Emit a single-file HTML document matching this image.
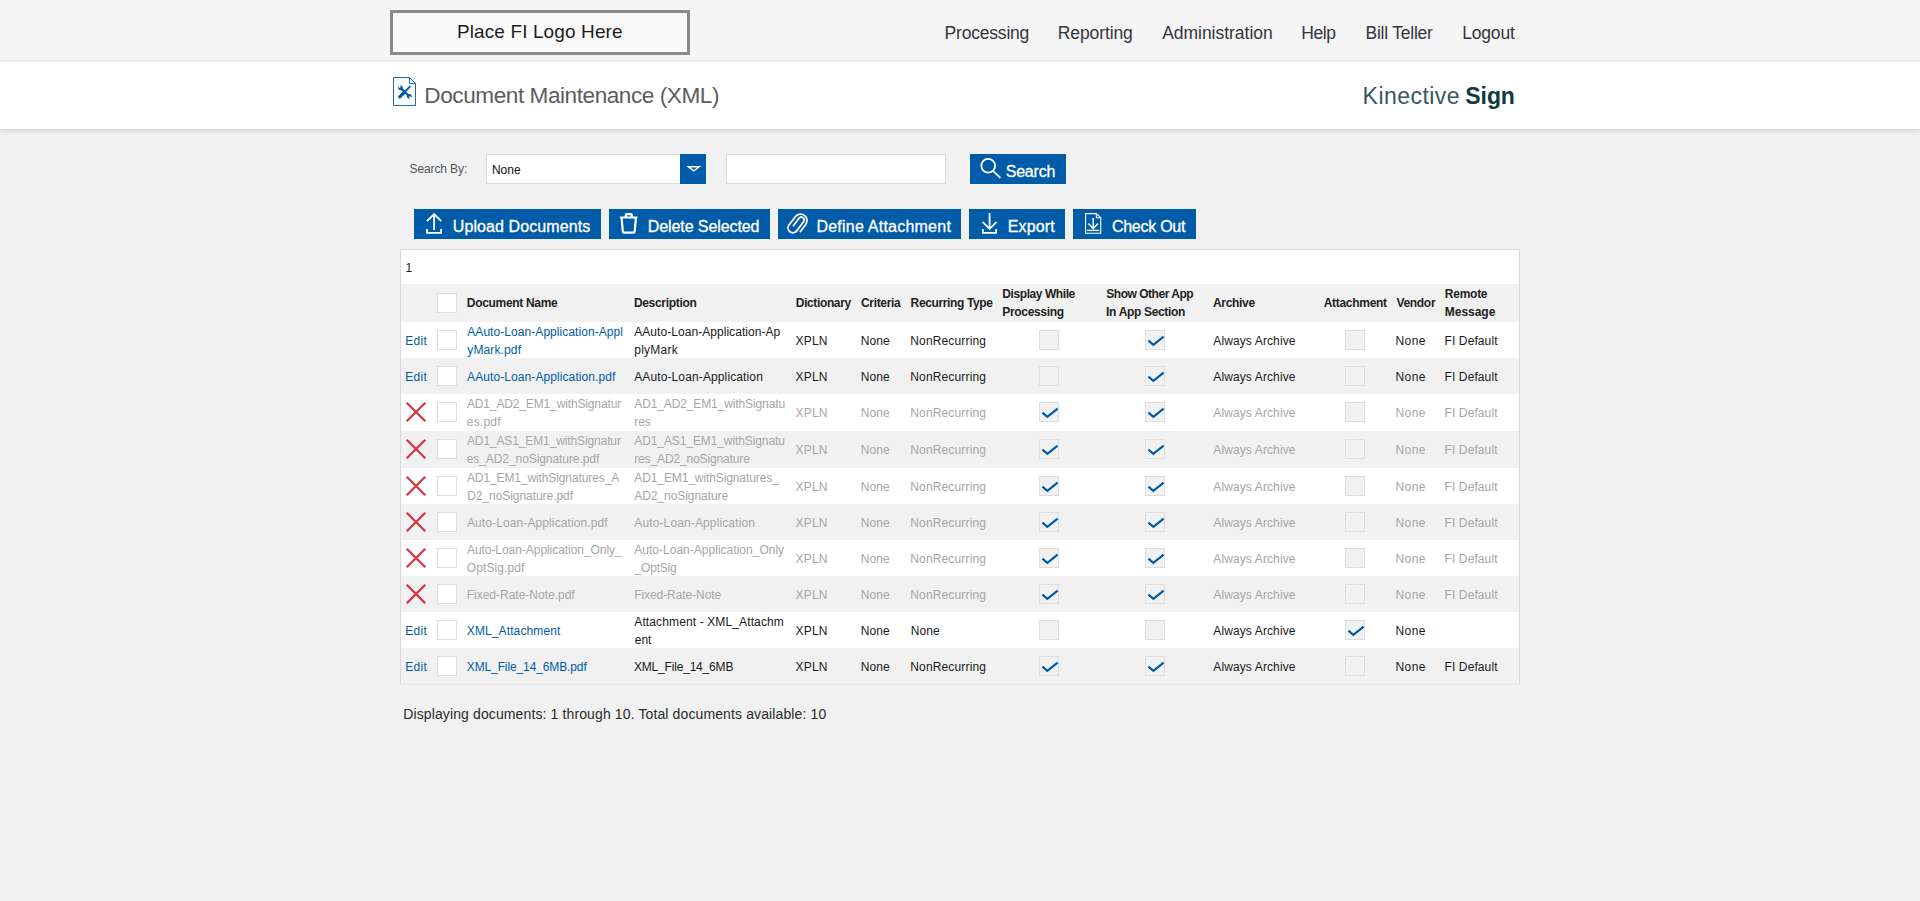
<!DOCTYPE html>
<html lang="en">
<head>
<meta charset="utf-8">
<title>Document Maintenance (XML)</title>
<style>
*{box-sizing:border-box;margin:0;padding:0}
html,body{width:1920px;height:901px;overflow:hidden}
body{background:#f1f1f1;font-family:"Liberation Sans",sans-serif;color:#222;position:relative}
div{white-space:nowrap}
#top{position:absolute;left:0;top:0;width:1920px;height:62px;background:#f5f5f5}
#logo{position:absolute;left:390px;top:10px;width:300px;height:45px;border:3px solid #8a8a8a;background:#fafafa}
#logo div{position:absolute;left:63.92px;top:7px;font-size:19px;line-height:24px;color:#1c1c1c;letter-spacing:0.118px}
.nav{position:absolute;display:block;white-space:nowrap;text-decoration:none;font-size:17.5px;line-height:22px;color:#34343f}
#band{position:absolute;left:0;top:62px;width:1920px;height:67px;background:#fff;box-shadow:0 1px 5px rgba(0,0,0,.17)}
#docico{position:absolute;left:390px;top:12px}
#title{position:absolute;left:424.35px;top:20px;font-size:22.6px;line-height:28px;color:#5c5c5c;letter-spacing:-0.452px}
#brand1,#brand2{position:absolute;top:20px;font-size:23px;line-height:28px;color:#0f3a41}
#brand1{left:1362.62px;letter-spacing:0.447px;color:#35595f}
#brand2{left:1465.29px;letter-spacing:-0.066px;font-weight:bold}
.lbl{position:absolute;left:409.54px;top:161px;font-size:12px;line-height:16px;color:#555;letter-spacing:-0.109px}
#sel{position:absolute;left:486px;top:154px;width:194px;height:30px;background:#fff;border:1px solid #dcdcdc;border-right:0}
#sel div{position:absolute;left:4.94px;top:7px;font-size:12px;line-height:16px;color:#111;letter-spacing:0.012px}
#selb{position:absolute;left:680px;top:154px;width:26px;height:30px;background:#005ca8}
#selb svg{position:absolute;left:0;top:0}
#inp{position:absolute;display:block;padding:0;margin:0;border-radius:0;outline:0;left:726px;top:154px;width:220px;height:30px;background:#fff;border:1px solid #dcdcdc}
.btn{position:absolute;display:block;border:0;padding:0;margin:0;border-radius:0;font-family:inherit;text-align:left;white-space:nowrap;overflow:visible;height:30px;background:#005ca8;color:#fff;font-size:16px;line-height:30px}
.btn span{position:absolute;top:3px;-webkit-text-stroke:0.3px #fff}
.btn svg{position:absolute;left:0;top:0}
#grid{position:absolute;left:400px;top:249px;width:1120px;height:436px;background:#fff;border:1px solid #d9d9d9;border-bottom-color:#e7e9eb}
#pager{position:absolute;left:4.52px;top:10px;font-size:12px;line-height:16px;color:#222}
.row{position:absolute;left:0;width:1118px}
.row.alt{background:#f1f1f1}
.row.hd{background:#f1f1f1;font-weight:bold}
.c{position:absolute;font-size:12px;line-height:18px;color:#1a1a1a}
.hd .c{color:#222}
.dis .c{color:#a6a6a6}
.c.lnk{color:#005ca8}
.cb{position:absolute;width:20px;height:20px;border:1px solid #dedede;background:#fff}
.cb.g{background:#f1f1f1}
.cb svg{position:absolute;left:-1px;top:-1px}
.xw{position:absolute;width:22px;height:22px}
#foot{position:absolute;left:403.21px;top:705px;font-size:14px;line-height:18px;color:#2a2a2a;letter-spacing:0.12px}
</style>
</head>
<body>
<div id="top">
<div id="logo"><div>Place FI Logo Here</div></div>
<a class="nav" style="left:944.54px;top:22px;letter-spacing:-0.195px">Processing</a>
<a class="nav" style="left:1057.82px;top:22px;letter-spacing:-0.115px">Reporting</a>
<a class="nav" style="left:1162.14px;top:22px;letter-spacing:-0.023px">Administration</a>
<a class="nav" style="left:1301.14px;top:22px;letter-spacing:-0.338px">Help</a>
<a class="nav" style="left:1365.54px;top:22px;letter-spacing:-0.238px">Bill Teller</a>
<a class="nav" style="left:1462.14px;top:22px;letter-spacing:-0.164px">Logout</a>
</div>
<div id="band">
<svg id="docico" width="30" height="36" viewBox="0 0 30 36" fill="none" stroke="#005ca8" stroke-width="0.9">
<path d="M3.5 3.5 H19.4 L25.5 9.4 V31.5 H3.5 Z M19.4 3.5 V9.5 H25.5"/>
<g transform="translate(-390 -74)">
<path d="M401 88.3 L409 96" stroke-width="2.3"/>
<circle cx="400.5" cy="87.9" r="2.4" fill="#005ca8" stroke="none"/><circle cx="409.3" cy="96.3" r="2.4" fill="#005ca8" stroke="none"/>
<path d="M400.3 87.6 L398.4 85.2 M409.5 96.6 L411.4 99" stroke="#fff" stroke-width="1.6"/>
<path d="M410.4 86.2 L405.6 91" stroke-width="1.8"/><path d="M404.7 92.1 L399.7 96.9" stroke-width="3.2" stroke-linecap="round"/>
</g>
</svg>
<div id="title">Document Maintenance (XML)</div>
<div id="brand1">Kinective</div><div id="brand2">Sign</div>
</div>
<div class="lbl">Search By:</div>
<div id="sel"><div>None</div></div><div id="selb"><svg width="26" height="30" viewBox="0 0 26 30" fill="none" stroke="#fff" stroke-width="1.4"><path d="M8.3 12.7 H19.3 L13.8 16.9 Z" stroke-linejoin="miter"/></svg></div>
<input id="inp" type="text" value="">
<button type="button" class="btn" style="left:970px;top:154px;width:96px"><svg width="40" height="30" viewBox="0 0 40 30" fill="none" stroke="#fff" stroke-width="1.8"><circle cx="18.2" cy="11.8" r="6.9"/><path d="M23.2 17.2 L30.4 23.8"/></svg><span style="left:35.71px;letter-spacing:-0.203px">Search</span></button>
<button type="button" class="btn" style="left:414px;top:209px;width:187px"><svg width="40" height="30" viewBox="0 0 40 30" fill="none" stroke="#fff" stroke-width="1.8"><path d="M13 20 V23.8 H27.1 V20" stroke-width="1.8"/><path d="M20.1 21 V4.8 M13 12.2 L20.1 5 L27.2 12.2"/></svg><span style="left:38.74px;letter-spacing:0.096px">Upload Documents</span></button>
<button type="button" class="btn" style="left:609px;top:209px;width:161px"><svg width="40" height="30" viewBox="0 0 40 30" fill="none" stroke="#fff" stroke-width="1.8"><path d="M12.6 9 L13.8 22.4 Q13.9 23.6 15.1 23.6 H24.4 Q25.6 23.6 25.7 22.4 L26.9 9 M10.9 8.5 H28.4 M16.8 8 V6.2 Q16.8 5.2 17.8 5.2 H21.8 Q22.8 5.2 22.8 6.2 V8" stroke-width="2.2"/></svg><span style="left:38.71px;letter-spacing:-0.084px">Delete Selected</span></button>
<button type="button" class="btn" style="left:778px;top:209px;width:183px"><svg width="40" height="30" viewBox="0 0 40 30" fill="none" stroke="#fff" stroke-width="1.8"><path transform="rotate(37)" d="M31.47 5.4 V-4.3 A6.51 6.51 0 0 0 18.45 -4.3 V6.2 A4.81 4.81 0 0 0 28.07 6.2 V-5.2 A2.84 2.84 0 0 0 22.39 -5.2 V4.7"/></svg><span style="left:38.38px;letter-spacing:0.232px">Define Attachment</span></button>
<button type="button" class="btn" style="left:969px;top:209px;width:96px"><svg width="40" height="30" viewBox="0 0 40 30" fill="none" stroke="#fff" stroke-width="1.8"><path d="M13.9 20 V23.9 H27.1 V20" stroke-width="1.7"/><path d="M20.6 4 V19.6 M13.6 12.8 L20.6 19.8 L27.6 12.8"/></svg><span style="left:38.79px;letter-spacing:0.129px">Export</span></button>
<button type="button" class="btn" style="left:1073px;top:209px;width:123px"><svg width="40" height="30" viewBox="0 0 40 30" fill="none" stroke="#fff" stroke-width="1.8"><path d="M12.6 4.6 H23.4 L27.8 8.8 V24.2 H12.6 Z M23.4 4.6 V8.8 H27.8" stroke-width="1.1"/><path d="M20.2 9 V19.4 M15.4 14.6 L20.2 19.6 L25 14.6" stroke-width="1.5"/><path d="M14.2 21.4 H26.2" stroke-width="1.3"/></svg><span style="left:38.94px;letter-spacing:-0.26px">Check Out</span></button>
<div id="grid" role="table">
<div id="pager">1</div>
<div role="row" class="row hd" style="top:34px;height:38px"><div class="cb" style="left:36px;top:9px"></div><div class="c" style="left:65.85000000000002px;top:10px;letter-spacing:-0.321px">Document Name</div><div class="c" style="left:232.90999999999997px;top:10px;letter-spacing:-0.315px">Description</div><div class="c" style="left:394.85px;top:10px;letter-spacing:-0.382px">Dictionary</div><div class="c" style="left:459.96000000000004px;top:10px;letter-spacing:-0.332px">Criteria</div><div class="c" style="left:509.59000000000003px;top:10px;letter-spacing:-0.369px">Recurring Type</div><div class="c" style="left:812.01px;top:10px;letter-spacing:-0.325px">Archive</div><div class="c" style="left:922.6400000000001px;top:10px;letter-spacing:-0.281px">Attachment</div><div class="c" style="left:995.4000000000001px;top:10px;letter-spacing:-0.298px">Vendor</div><div class="c" style="left:601.37px;top:1px;letter-spacing:-0.428px">Display While</div><div class="c" style="left:601.37px;top:19px;letter-spacing:-0.34px">Processing</div><div class="c" style="left:705.29px;top:1px;letter-spacing:-0.478px">Show Other App</div><div class="c" style="left:705.0899999999999px;top:19px;letter-spacing:-0.328px">In App Section</div><div class="c" style="left:1043.82px;top:1px;letter-spacing:-0.256px">Remote</div><div class="c" style="left:1043.82px;top:19px;letter-spacing:-0.026px">Message</div></div>
<div role="row" class="row" style="top:72px;height:36px"><div class="c lnk" style="left:4.35px;top:10px;letter-spacing:0.271px">Edit</div><div class="cb" style="left:36px;top:8px"></div><div class="c lnk" style="left:66.25px;top:1px;letter-spacing:0.063px">AAuto-Loan-Application-Appl</div><div class="c lnk" style="left:66.27px;top:19px;letter-spacing:0.128px">yMark.pdf</div><div class="c" style="left:233.28px;top:1px;letter-spacing:0.049px">AAuto-Loan-Application-Ap</div><div class="c" style="left:233.25px;top:19px;letter-spacing:0.233px">plyMark</div><div class="c" style="left:394.56px;top:10px;letter-spacing:0.167px">XPLN</div><div class="c" style="left:459.82px;top:10px;letter-spacing:0.054px">None</div><div class="c" style="left:509.24px;top:10px;letter-spacing:0.153px">NonRecurring</div><div class="cb g" style="left:638px;top:8px"></div><div class="cb g" style="left:744px;top:8px"><svg width="20" height="20" viewBox="0 0 20 20"><path d="M3.4 10.6 L8.4 14.9 L18.6 6.7" fill="none" stroke="#005ca8" stroke-width="2.2"/></svg></div><div class="c" style="left:812.28px;top:10px;letter-spacing:0.116px">Always Archive</div><div class="cb g" style="left:944px;top:8px"></div><div class="c" style="left:994.58px;top:10px;letter-spacing:0.364px">None</div><div class="c" style="left:1043.56px;top:10px;letter-spacing:0.104px">FI Default</div></div>
<div role="row" class="row alt" style="top:108px;height:36px"><div class="c lnk" style="left:4.35px;top:10px;letter-spacing:0.271px">Edit</div><div class="cb" style="left:36px;top:8px"></div><div class="c lnk" style="left:66.07px;top:10px;letter-spacing:0.088px">AAuto-Loan-Application.pdf</div><div class="c" style="left:233.16px;top:10px;letter-spacing:0.122px">AAuto-Loan-Application</div><div class="c" style="left:394.56px;top:10px;letter-spacing:0.167px">XPLN</div><div class="c" style="left:459.82px;top:10px;letter-spacing:0.054px">None</div><div class="c" style="left:509.24px;top:10px;letter-spacing:0.153px">NonRecurring</div><div class="cb g" style="left:638px;top:8px"></div><div class="cb g" style="left:744px;top:8px"><svg width="20" height="20" viewBox="0 0 20 20"><path d="M3.4 10.6 L8.4 14.9 L18.6 6.7" fill="none" stroke="#005ca8" stroke-width="2.2"/></svg></div><div class="c" style="left:812.28px;top:10px;letter-spacing:0.116px">Always Archive</div><div class="cb g" style="left:944px;top:8px"></div><div class="c" style="left:994.58px;top:10px;letter-spacing:0.364px">None</div><div class="c" style="left:1043.56px;top:10px;letter-spacing:0.104px">FI Default</div></div>
<div role="row" class="row dis" style="top:144px;height:37px"><div class="xw" style="left:4px;top:7px"><svg width="22" height="22" viewBox="0 0 22 22"><path d="M1.7 1.7 L20.3 20.3 M20.3 1.7 L1.7 20.3" fill="none" stroke="#dc3545" stroke-width="2.3"/></svg></div><div class="cb" style="left:36px;top:8px"></div><div class="c" style="left:65.94px;top:1px;letter-spacing:-0.139px">AD1_AD2_EM1_withSignatur</div><div class="c" style="left:65.73px;top:19px;letter-spacing:0.237px">es.pdf</div><div class="c" style="left:233.27px;top:1px;letter-spacing:-0.119px">AD1_AD2_EM1_withSignatu</div><div class="c" style="left:233.21px;top:19px;letter-spacing:-0.033px">res</div><div class="c" style="left:394.56px;top:10px;letter-spacing:0.167px">XPLN</div><div class="c" style="left:459.82px;top:10px;letter-spacing:0.054px">None</div><div class="c" style="left:509.24px;top:10px;letter-spacing:0.153px">NonRecurring</div><div class="cb g" style="left:638px;top:8px"><svg width="20" height="20" viewBox="0 0 20 20"><path d="M3.4 10.6 L8.4 14.9 L18.6 6.7" fill="none" stroke="#005ca8" stroke-width="2.2"/></svg></div><div class="cb g" style="left:744px;top:8px"><svg width="20" height="20" viewBox="0 0 20 20"><path d="M3.4 10.6 L8.4 14.9 L18.6 6.7" fill="none" stroke="#005ca8" stroke-width="2.2"/></svg></div><div class="c" style="left:812.28px;top:10px;letter-spacing:0.116px">Always Archive</div><div class="cb g" style="left:944px;top:8px"></div><div class="c" style="left:994.58px;top:10px;letter-spacing:0.364px">None</div><div class="c" style="left:1043.56px;top:10px;letter-spacing:0.104px">FI Default</div></div>
<div role="row" class="row alt dis" style="top:181px;height:37px"><div class="xw" style="left:4px;top:7px"><svg width="22" height="22" viewBox="0 0 22 22"><path d="M1.7 1.7 L20.3 20.3 M20.3 1.7 L1.7 20.3" fill="none" stroke="#dc3545" stroke-width="2.3"/></svg></div><div class="cb" style="left:36px;top:8px"></div><div class="c" style="left:65.96px;top:1px;letter-spacing:-0.122px">AD1_AS1_EM1_withSignatur</div><div class="c" style="left:65.73px;top:19px;letter-spacing:-0.076px">es_AD2_noSignature.pdf</div><div class="c" style="left:233.3px;top:1px;letter-spacing:-0.099px">AD1_AS1_EM1_withSignatu</div><div class="c" style="left:233.21px;top:19px;letter-spacing:-0.132px">res_AD2_noSignature</div><div class="c" style="left:394.56px;top:10px;letter-spacing:0.167px">XPLN</div><div class="c" style="left:459.82px;top:10px;letter-spacing:0.054px">None</div><div class="c" style="left:509.24px;top:10px;letter-spacing:0.153px">NonRecurring</div><div class="cb g" style="left:638px;top:8px"><svg width="20" height="20" viewBox="0 0 20 20"><path d="M3.4 10.6 L8.4 14.9 L18.6 6.7" fill="none" stroke="#005ca8" stroke-width="2.2"/></svg></div><div class="cb g" style="left:744px;top:8px"><svg width="20" height="20" viewBox="0 0 20 20"><path d="M3.4 10.6 L8.4 14.9 L18.6 6.7" fill="none" stroke="#005ca8" stroke-width="2.2"/></svg></div><div class="c" style="left:812.28px;top:10px;letter-spacing:0.116px">Always Archive</div><div class="cb g" style="left:944px;top:8px"></div><div class="c" style="left:994.58px;top:10px;letter-spacing:0.364px">None</div><div class="c" style="left:1043.56px;top:10px;letter-spacing:0.104px">FI Default</div></div>
<div role="row" class="row dis" style="top:218px;height:36px"><div class="xw" style="left:4px;top:7px"><svg width="22" height="22" viewBox="0 0 22 22"><path d="M1.7 1.7 L20.3 20.3 M20.3 1.7 L1.7 20.3" fill="none" stroke="#dc3545" stroke-width="2.3"/></svg></div><div class="cb" style="left:36px;top:8px"></div><div class="c" style="left:65.94px;top:1px;letter-spacing:-0.108px">AD1_EM1_withSignatures_A</div><div class="c" style="left:66.2px;top:19px;letter-spacing:-0.054px">D2_noSignature.pdf</div><div class="c" style="left:233.27px;top:1px;letter-spacing:-0.102px">AD1_EM1_withSignatures_</div><div class="c" style="left:233.27px;top:19px;letter-spacing:-0.059px">AD2_noSignature</div><div class="c" style="left:394.56px;top:10px;letter-spacing:0.167px">XPLN</div><div class="c" style="left:459.82px;top:10px;letter-spacing:0.054px">None</div><div class="c" style="left:509.24px;top:10px;letter-spacing:0.153px">NonRecurring</div><div class="cb g" style="left:638px;top:8px"><svg width="20" height="20" viewBox="0 0 20 20"><path d="M3.4 10.6 L8.4 14.9 L18.6 6.7" fill="none" stroke="#005ca8" stroke-width="2.2"/></svg></div><div class="cb g" style="left:744px;top:8px"><svg width="20" height="20" viewBox="0 0 20 20"><path d="M3.4 10.6 L8.4 14.9 L18.6 6.7" fill="none" stroke="#005ca8" stroke-width="2.2"/></svg></div><div class="c" style="left:812.28px;top:10px;letter-spacing:0.116px">Always Archive</div><div class="cb g" style="left:944px;top:8px"></div><div class="c" style="left:994.58px;top:10px;letter-spacing:0.364px">None</div><div class="c" style="left:1043.56px;top:10px;letter-spacing:0.104px">FI Default</div></div>
<div role="row" class="row alt dis" style="top:254px;height:36px"><div class="xw" style="left:4px;top:7px"><svg width="22" height="22" viewBox="0 0 22 22"><path d="M1.7 1.7 L20.3 20.3 M20.3 1.7 L1.7 20.3" fill="none" stroke="#dc3545" stroke-width="2.3"/></svg></div><div class="cb" style="left:36px;top:8px"></div><div class="c" style="left:65.96px;top:10px;letter-spacing:0.109px">Auto-Loan-Application.pdf</div><div class="c" style="left:233.3px;top:10px;letter-spacing:0.126px">Auto-Loan-Application</div><div class="c" style="left:394.56px;top:10px;letter-spacing:0.167px">XPLN</div><div class="c" style="left:459.82px;top:10px;letter-spacing:0.054px">None</div><div class="c" style="left:509.24px;top:10px;letter-spacing:0.153px">NonRecurring</div><div class="cb g" style="left:638px;top:8px"><svg width="20" height="20" viewBox="0 0 20 20"><path d="M3.4 10.6 L8.4 14.9 L18.6 6.7" fill="none" stroke="#005ca8" stroke-width="2.2"/></svg></div><div class="cb g" style="left:744px;top:8px"><svg width="20" height="20" viewBox="0 0 20 20"><path d="M3.4 10.6 L8.4 14.9 L18.6 6.7" fill="none" stroke="#005ca8" stroke-width="2.2"/></svg></div><div class="c" style="left:812.28px;top:10px;letter-spacing:0.116px">Always Archive</div><div class="cb g" style="left:944px;top:8px"></div><div class="c" style="left:994.58px;top:10px;letter-spacing:0.364px">None</div><div class="c" style="left:1043.56px;top:10px;letter-spacing:0.104px">FI Default</div></div>
<div role="row" class="row dis" style="top:290px;height:36px"><div class="xw" style="left:4px;top:7px"><svg width="22" height="22" viewBox="0 0 22 22"><path d="M1.7 1.7 L20.3 20.3 M20.3 1.7 L1.7 20.3" fill="none" stroke="#dc3545" stroke-width="2.3"/></svg></div><div class="cb" style="left:36px;top:8px"></div><div class="c" style="left:65.94px;top:1px;letter-spacing:-0.051px">Auto-Loan-Application_Only_</div><div class="c" style="left:65.84px;top:19px;letter-spacing:0.091px">OptSig.pdf</div><div class="c" style="left:233.27px;top:1px;letter-spacing:0.017px">Auto-Loan-Application_Only</div><div class="c" style="left:233.6px;top:19px;letter-spacing:-0.208px">_OptSig</div><div class="c" style="left:394.56px;top:10px;letter-spacing:0.167px">XPLN</div><div class="c" style="left:459.82px;top:10px;letter-spacing:0.054px">None</div><div class="c" style="left:509.24px;top:10px;letter-spacing:0.153px">NonRecurring</div><div class="cb g" style="left:638px;top:8px"><svg width="20" height="20" viewBox="0 0 20 20"><path d="M3.4 10.6 L8.4 14.9 L18.6 6.7" fill="none" stroke="#005ca8" stroke-width="2.2"/></svg></div><div class="cb g" style="left:744px;top:8px"><svg width="20" height="20" viewBox="0 0 20 20"><path d="M3.4 10.6 L8.4 14.9 L18.6 6.7" fill="none" stroke="#005ca8" stroke-width="2.2"/></svg></div><div class="c" style="left:812.28px;top:10px;letter-spacing:0.116px">Always Archive</div><div class="cb g" style="left:944px;top:8px"></div><div class="c" style="left:994.58px;top:10px;letter-spacing:0.364px">None</div><div class="c" style="left:1043.56px;top:10px;letter-spacing:0.104px">FI Default</div></div>
<div role="row" class="row alt dis" style="top:326px;height:36px"><div class="xw" style="left:4px;top:7px"><svg width="22" height="22" viewBox="0 0 22 22"><path d="M1.7 1.7 L20.3 20.3 M20.3 1.7 L1.7 20.3" fill="none" stroke="#dc3545" stroke-width="2.3"/></svg></div><div class="cb" style="left:36px;top:8px"></div><div class="c" style="left:65.68px;top:10px;letter-spacing:-0.002px">Fixed-Rate-Note.pdf</div><div class="c" style="left:233.2px;top:10px;letter-spacing:-0.075px">Fixed-Rate-Note</div><div class="c" style="left:394.56px;top:10px;letter-spacing:0.167px">XPLN</div><div class="c" style="left:459.82px;top:10px;letter-spacing:0.054px">None</div><div class="c" style="left:509.24px;top:10px;letter-spacing:0.153px">NonRecurring</div><div class="cb g" style="left:638px;top:8px"><svg width="20" height="20" viewBox="0 0 20 20"><path d="M3.4 10.6 L8.4 14.9 L18.6 6.7" fill="none" stroke="#005ca8" stroke-width="2.2"/></svg></div><div class="cb g" style="left:744px;top:8px"><svg width="20" height="20" viewBox="0 0 20 20"><path d="M3.4 10.6 L8.4 14.9 L18.6 6.7" fill="none" stroke="#005ca8" stroke-width="2.2"/></svg></div><div class="c" style="left:812.28px;top:10px;letter-spacing:0.116px">Always Archive</div><div class="cb g" style="left:944px;top:8px"></div><div class="c" style="left:994.58px;top:10px;letter-spacing:0.364px">None</div><div class="c" style="left:1043.56px;top:10px;letter-spacing:0.104px">FI Default</div></div>
<div role="row" class="row" style="top:362px;height:36px"><div class="c lnk" style="left:4.35px;top:10px;letter-spacing:0.271px">Edit</div><div class="cb" style="left:36px;top:8px"></div><div class="c lnk" style="left:65.81px;top:10px;letter-spacing:0.114px">XML_Attachment</div><div class="c" style="left:233.28px;top:1px;letter-spacing:0.123px">Attachment - XML_Attachm</div><div class="c" style="left:233.74px;top:19px;letter-spacing:-0.004px">ent</div><div class="c" style="left:394.56px;top:10px;letter-spacing:0.167px">XPLN</div><div class="c" style="left:459.82px;top:10px;letter-spacing:0.054px">None</div><div class="c" style="left:509.82px;top:10px;letter-spacing:0.054px">None</div><div class="cb g" style="left:638px;top:8px"></div><div class="cb g" style="left:744px;top:8px"></div><div class="c" style="left:812.28px;top:10px;letter-spacing:0.116px">Always Archive</div><div class="cb g" style="left:944px;top:8px"><svg width="20" height="20" viewBox="0 0 20 20"><path d="M3.4 10.6 L8.4 14.9 L18.6 6.7" fill="none" stroke="#005ca8" stroke-width="2.2"/></svg></div><div class="c" style="left:994.58px;top:10px;letter-spacing:0.364px">None</div></div>
<div role="row" class="row alt" style="top:398px;height:36px"><div class="c lnk" style="left:4.35px;top:10px;letter-spacing:0.271px">Edit</div><div class="cb" style="left:36px;top:8px"></div><div class="c lnk" style="left:65.77px;top:10px;letter-spacing:-0.117px">XML_File_14_6MB.pdf</div><div class="c" style="left:232.92px;top:10px;letter-spacing:-0.182px">XML_File_14_6MB</div><div class="c" style="left:394.56px;top:10px;letter-spacing:0.167px">XPLN</div><div class="c" style="left:459.82px;top:10px;letter-spacing:0.054px">None</div><div class="c" style="left:509.24px;top:10px;letter-spacing:0.153px">NonRecurring</div><div class="cb g" style="left:638px;top:8px"><svg width="20" height="20" viewBox="0 0 20 20"><path d="M3.4 10.6 L8.4 14.9 L18.6 6.7" fill="none" stroke="#005ca8" stroke-width="2.2"/></svg></div><div class="cb g" style="left:744px;top:8px"><svg width="20" height="20" viewBox="0 0 20 20"><path d="M3.4 10.6 L8.4 14.9 L18.6 6.7" fill="none" stroke="#005ca8" stroke-width="2.2"/></svg></div><div class="c" style="left:812.28px;top:10px;letter-spacing:0.116px">Always Archive</div><div class="cb g" style="left:944px;top:8px"></div><div class="c" style="left:994.58px;top:10px;letter-spacing:0.364px">None</div><div class="c" style="left:1043.56px;top:10px;letter-spacing:0.104px">FI Default</div></div>
</div>
<div id="foot">Displaying documents: 1 through 10. Total documents available: 10</div>
</body>
</html>
